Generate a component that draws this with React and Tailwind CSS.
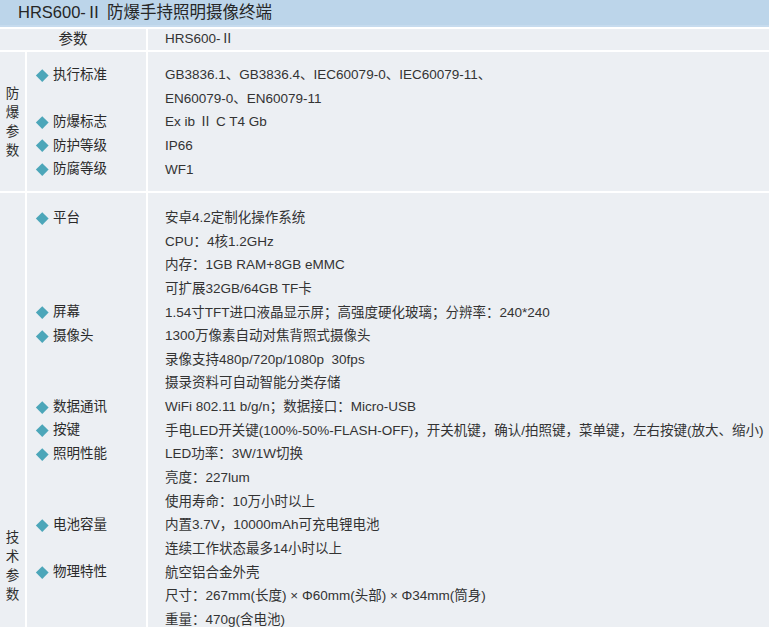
import React from "react";

const font = { fontFamily: '"Liberation Sans","Noto Sans CJK SC",sans-serif' };

const sec1 = [
  ["执行标准", ["GB3836.1、GB3836.4、IEC60079-0、IEC60079-11、", "EN60079-0、EN60079-11"]],
  ["防爆标志", ["Ex ib Ⅱ C T4 Gb"]],
  ["防护等级", ["IP66"]],
  ["防腐等级", ["WF1"]],
];

const sec2 = [
  ["平台", ["安卓4.2定制化操作系统", "CPU：4核1.2GHz", "内存：1GB RAM+8GB eMMC", "可扩展32GB/64GB TF卡"]],
  ["屏幕", ["1.54寸TFT进口液晶显示屏；高强度硬化玻璃；分辨率：240*240"]],
  ["摄像头", ["1300万像素自动对焦背照式摄像头", "录像支持480p/720p/1080p  30fps", "摄录资料可自动智能分类存储"]],
  ["数据通讯", ["WiFi 802.11 b/g/n；数据接口：Micro-USB"]],
  ["按键", ["手电LED开关键(100%-50%-FLASH-OFF)，开关机键，确认/拍照键，菜单键，左右按键(放大、缩小)"]],
  ["照明性能", ["LED功率：3W/1W切换", "亮度：227lum", "使用寿命：10万小时以上"]],
  ["电池容量", ["内置3.7V，10000mAh可充电锂电池", "连续工作状态最多14小时以上"]],
  ["物理特性", ["航空铝合金外壳", "尺寸：267mm(长度) × Φ60mm(头部) × Φ34mm(筒身)", "重量：470g(含电池)"]],
];

function Section({ title, rows, className, titleClass, padClass }) {
  return (
    <div className={`grid grid-cols-[25px_119px_1fr] gap-x-[2px] ${className}`}>
      <div className={`bg-[#eceff3] flex flex-col items-center ${titleClass}`}>
        {title.split("").map((c, i) => (
          <div key={i} className="text-[13.5px] leading-[19px] text-[#2f2f2f]">{c}</div>
        ))}
      </div>
      <div className={`bg-[#eceff3] ${padClass}`}>
        {rows.map(([label, lines], i) => (
          <div key={i}>
            <div className="flex items-center h-[23.65px] pl-[11px]">
              <span className="w-[8.5px] h-[8.5px] bg-[#4ca6b9] rotate-45 shrink-0" />
              <span className="ml-[6.5px] text-[13.5px] text-[#2a2a2a]">{label}</span>
            </div>
            {lines.slice(1).map((_, j) => (
              <div key={j} className="h-[23.65px]" />
            ))}
          </div>
        ))}
      </div>
      <div className={`bg-[#eceff3] pl-[17px] ${padClass}`}>
        {rows.flatMap(([, lines]) => lines).map((l, i) => (
          <div key={i} className="h-[23.65px] leading-[23.65px] text-[13.5px] text-[#333] whitespace-pre">{l}</div>
        ))}
      </div>
    </div>
  );
}

export default function App() {
  return (
    <div className="w-[769px] h-[627px] overflow-hidden bg-white" style={font}>
      <div className="h-[27px] bg-[#bcd5ea] border-b-2 border-[#c6dbee] pl-[18px] flex items-center text-[16.5px] text-[#262626]">
        HRS600-Ⅱ 防爆手持照明摄像终端
      </div>
      <div className="mt-[2px] grid grid-cols-[146px_1fr] gap-x-[2px]">
        <div className="h-[21px] bg-[#eceff3] flex items-center justify-center text-[14.5px] text-[#2a2a2a]">参数</div>
        <div className="h-[21px] bg-[#eceff3] flex items-center pl-[17px] text-[13.5px] text-[#333]">HRS600-Ⅱ</div>
      </div>
      <Section
        title="防爆参数"
        rows={sec1}
        className="mt-[2px] h-[139px]"
        titleClass="justify-center"
        padClass="pt-[11px]"
      />
      <Section
        title="技术参数"
        rows={sec2}
        className="mt-[2px] h-[480px]"
        titleClass="pt-[335px]"
        padClass="pt-[13px]"
      />
    </div>
  );
}
